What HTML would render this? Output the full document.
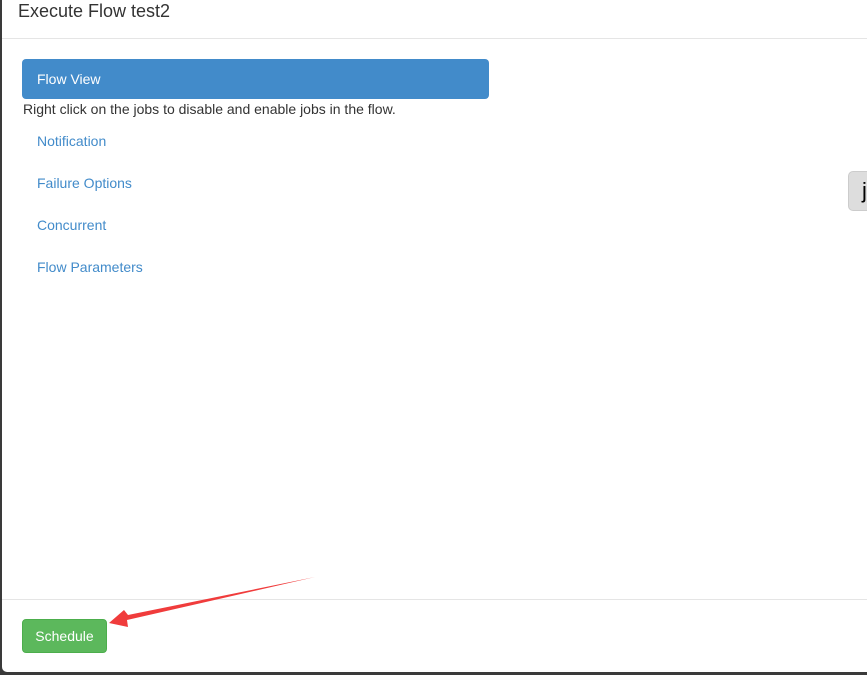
<!DOCTYPE html>
<html><head><style>
body{margin:0;width:867px;height:675px;background:#3a3a3a;position:relative;overflow:hidden;font-family:"Liberation Sans",sans-serif}
.m{position:absolute;left:2px;top:0;width:865px;height:672px;background:#fff;border-bottom-left-radius:5px}
.t{position:absolute;left:16px;top:0;font-size:18px;color:#333;line-height:22px}
.hl{position:absolute;left:0;right:0;top:38px;height:1px;background:#e5e5e5}
.fv{position:absolute;left:20px;top:59px;width:467px;height:40px;background:#428bca;border-radius:4px;color:#fff;font-size:14px;line-height:40px;box-sizing:border-box;padding-left:15px}
.d{position:absolute;left:21px;top:101px;font-size:14px;color:#333}
.l{position:absolute;left:35px;font-size:14px;color:#428bca}
.g{position:absolute;left:846px;top:171px;width:30px;height:40px;background:#ddd;border:1px solid #ccc;border-radius:5px;box-sizing:border-box;font-size:22px;padding-left:13px;line-height:38px}
.fl{position:absolute;left:0;right:0;top:599px;height:1px;background:#e5e5e5}
.b{position:absolute;left:20px;top:619px;width:85px;height:34px;background:#5cb85c;border:1px solid #4cae4c;border-radius:4px;box-sizing:border-box;color:#fff;font-size:14px;line-height:32px;text-align:center}
</style></head><body>
<div class="m">
<div class="t">Execute Flow test2</div>
<div class="hl"></div>
<div class="fv">Flow View</div>
<div class="d">Right click on the jobs to disable and enable jobs in the flow.</div>
<div class="l" style="top:133px">Notification</div>
<div class="l" style="top:175px">Failure Options</div>
<div class="l" style="top:217px">Concurrent</div>
<div class="l" style="top:259px">Flow Parameters</div>
<div class="g">j</div>
<div class="fl"></div>
<div class="b">Schedule</div>
</div>
<svg style="position:absolute;left:0;top:0" width="867" height="675"><polygon points="315,577 128,615 124,610 109,623 128,627 127,620" fill="#f03c3c"/></svg>
</body></html>
